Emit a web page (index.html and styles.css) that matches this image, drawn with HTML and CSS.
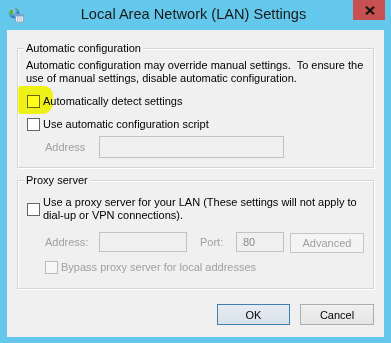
FILE: index.html
```html
<!DOCTYPE html>
<html>
<head>
<meta charset="utf-8">
<link rel="stylesheet" href="styles.css">
</head>
<body>
<div class="window">
  <div class="titlebar">
    <svg class="appicon" width="16" height="16" viewBox="0 0 16 16">
      <defs>
        <radialGradient id="gl" cx="0.35" cy="0.3" r="0.8">
          <stop offset="0" stop-color="#bfe8ff"/>
          <stop offset="0.6" stop-color="#3a97dc"/>
          <stop offset="1" stop-color="#1d5fa8"/>
        </radialGradient>
      </defs>
      <circle cx="6" cy="6" r="5.3" fill="url(#gl)"/>
      <path d="M2.2 3.5 C3.5 2.2 5 2.4 5.6 3.6 C6 4.8 4.6 5.2 4.8 6.6 C5 8 3.6 8.6 2.6 8 C1.4 6.8 1.2 4.8 2.2 3.5 Z" fill="#5fae3e"/>
      <path d="M7.4 1.4 C8.8 1.8 10 2.8 10.6 4 C9.6 4.4 8.6 3.8 7.8 3.2 Z" fill="#5fae3e"/>
      <rect x="7.5" y="7.5" width="8" height="7.5" fill="#f4f8fb" stroke="#8ea4b8"/>
      <rect x="8" y="8" width="7" height="1.5" fill="#6fa3d6"/>
      <rect x="9" y="10.5" width="1.2" height="1" fill="#4a7fb8"/>
      <rect x="11" y="10.5" width="3.5" height="1" fill="#9fb6cc"/>
      <rect x="9" y="12.5" width="1.2" height="1" fill="#4a7fb8"/>
      <rect x="11" y="12.5" width="3.5" height="1" fill="#9fb6cc"/>
    </svg>
    <div class="title">Local Area Network (LAN) Settings</div>
    <div class="close">
      <svg width="10" height="9" viewBox="0 0 10 9"><path d="M1 0.8 L9 8.2 M9 0.8 L1 8.2" stroke="#141414" stroke-width="2.2" fill="none"/></svg>
    </div>
  </div>
  <div class="client">
    <div class="highlight"></div>
    <div class="group g1">
      <div class="legend">Automatic configuration</div>
      <p class="desc">Automatic configuration may override manual settings.&nbsp; To ensure the<br>use of manual settings, disable automatic configuration.</p>
      <div class="row r1"><span class="cb"></span><span class="lbl">Automatically detect settings</span></div>
      <div class="row r2"><span class="cb"></span><span class="lbl">Use automatic configuration script</span></div>
      <div class="addr-row">
        <span class="dis addr-lbl">Address</span>
        <span class="input addr-input"></span>
      </div>
    </div>
    <div class="group g2">
      <div class="legend">Proxy server</div>
      <div class="row two"><span class="cb"></span><span class="lbl">Use a proxy server for your LAN (These settings will not apply to<br>dial-up or VPN connections).</span></div>
      <div class="proxy-row">
        <span class="dis paddr-lbl">Address:</span>
        <span class="input paddr-input"></span>
        <span class="dis port-lbl">Port:</span>
        <span class="input port-input">80</span>
        <span class="btn dis-btn">Advanced</span>
      </div>
      <div class="row bypass"><span class="cb cb-dis"></span><span class="lbl dis">Bypass proxy server for local addresses</span></div>
    </div>
    <div class="buttons">
      <span class="btn default">OK</span>
      <span class="btn cancel">Cancel</span>
    </div>
  </div>
</div>
</body>
</html>
```
FILE: styles.css
```css
* { box-sizing: border-box; margin: 0; padding: 0; }
html, body { width: 391px; height: 343px; overflow: hidden; }
body {
  background: #64c8ec;
  font-family: "Liberation Sans", Arial, sans-serif;
  font-size: 11px;
  color: #000;
}
.window {
  width: 391px;
  height: 343px;
  display: flex;
  flex-direction: column;
  background: #64c8ec;
}
.titlebar {
  height: 30px;
  display: flex;
  align-items: flex-start;
  flex: none;
}
.appicon { margin: 7px 0 0 8px; flex: none; }
.title {
  flex: 1;
  text-align: center;
  font-size: 14.6px;
  line-height: 20px;
  margin-top: 4px;
  padding-left: 10px;
  color: #1a1a1a;
  white-space: nowrap;
}
.close {
  width: 32px;
  height: 20px;
  margin-right: 6px;
  background: #c75050;
  flex: none;
  display: flex;
  justify-content: center;
  align-items: flex-start;
  padding-top: 6px;
}
.close svg { display: block; margin-left: 2px; }
.client {
  flex: 1;
  margin: 0 7px 6px 7px;
  background: #f0f0f0;
  display: flex;
  flex-direction: column;
  position: relative;
}
.highlight {
  position: absolute;
  left: 11px;
  top: 56px;
  width: 35px;
  height: 28px;
  background: #ffff1a;
  border-radius: 3px 9px 11px 3px;
  mix-blend-mode: multiply;
  filter: blur(0.5px);
  z-index: 2;
  pointer-events: none;
}
.group {
  margin: 0 10px 0 10px;
  border: 1px solid #d5d5d5;
  box-shadow: inset 1px 1px 0 #fff, 1px 1px 0 #fff;
  padding: 0 8px 9px 9px;
}
.g1 { margin-top: 18px; }
.g2 { margin-top: 12px; padding-bottom: 10px; }
.legend {
  width: max-content;
  margin: -9px 0 0 -3px;
  padding: 0 2px;
  line-height: 16px;
  background: #f0f0f0;
}
.desc {
  margin-top: 3px;
  margin-left: -1px;
  line-height: 13px;
  white-space: nowrap;
}
.row {
  display: flex;
  align-items: center;
  height: 22px;
  line-height: 13px;
  white-space: nowrap;
}
.row .lbl { margin-left: 3px; }
.r1 { margin-top: 5px; }
.r2 { margin-top: 1px; }
.row.two { margin-top: 8px; height: 26px; }
.cb {
  width: 13px;
  height: 13px;
  border: 1px solid #666;
  background: #fff;
  flex: none;
}
.cb-dis { border-color: #bcbcbc; background: #f7f7f7; }
.dis { color: #a0a0a0; }
.addr-row {
  display: flex;
  align-items: center;
  margin-top: 1px;
  padding-left: 18px;
  line-height: 13px;
}
.addr-lbl { width: 54px; }
.input {
  border: 1px solid #c2c2c2;
  background: #f0f0f0;
  flex: none;
}
.addr-input { width: 185px; height: 22px; }
.proxy-row {
  display: flex;
  align-items: flex-start;
  margin-top: 10px;
  padding-left: 18px;
  height: 21px;
  line-height: 13px;
  white-space: nowrap;
}
.proxy-row > .dis { height: 20px; display: flex; align-items: center; }
.paddr-lbl { width: 54px; }
.paddr-input { width: 88px; height: 20px; }
.port-lbl { margin-left: 13px; width: 36px; }
.port-input {
  width: 48px;
  height: 20px;
  color: #8c8c8c;
  padding-left: 6px;
  display: flex;
  align-items: center;
}
.btn {
  display: flex;
  align-items: center;
  justify-content: center;
  height: 21px;
  border: 1px solid #acacac;
  background: linear-gradient(#f0f0f0, #e5e5e5);
  white-space: nowrap;
  flex: none;
}
.dis-btn {
  margin-left: 6px;
  margin-top: 1px;
  width: 74px;
  height: 20px;
  border-color: #c6c6c6;
  background: #f4f4f4;
  color: #a0a0a0;
}
.bypass { margin-top: 3px; padding-left: 18px; }
.buttons {
  display: flex;
  justify-content: flex-end;
  gap: 10px;
  margin-top: 15px;
  padding-right: 10px;
}
.default {
  width: 73px;
  border-color: #3c7fb1;
  background: linear-gradient(#e6ecf1, #d8e1e9);
}
.cancel { width: 74px; }
```
